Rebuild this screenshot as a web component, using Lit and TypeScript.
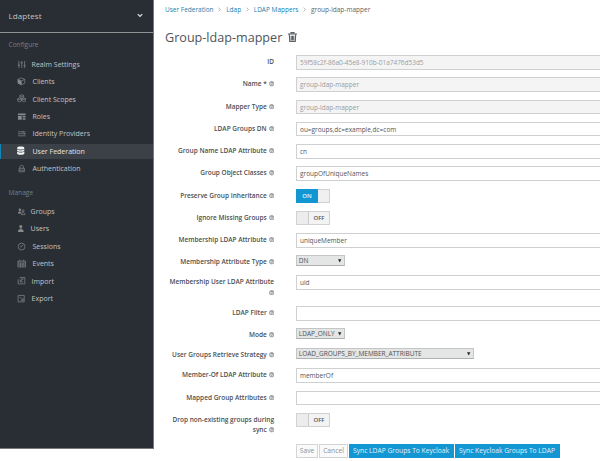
import { LitElement, html, css, svg, nothing } from "lit";
import { customElement } from "lit/decorators.js";
import { classMap } from "lit/directives/class-map.js";

const icons: Record<string, unknown> = {
  sliders: svg`<path d="M2 1v7.5M5 1v7.5M8 1v7.5M.8 5.5h2.4M3.8 3h2.4M6.8 6h2.4" />`,
  cube: svg`<path d="M4.5 1 8.2 2.5v4L4.5 8.3 1 6.5v-4zM1 2.5l3.5 1.7L8.2 2.5M4.5 4.2v4" /><path class="fill" d="M4.5 4.2 1 2.6v3.9l3.5 1.8z" />`,
  cubes: svg`<path d="M5 .8 7 1.7v2L5 4.6 3 3.7v-2zM2.7 4.2l2 .9v2.2l-2 1-2-1V5.1zM7.3 4.2l2 .9v2.2l-2 1-2-1V5.1zM3 1.8l2 .9 2-.9M.8 5.2l1.9.9 2-.9M5.3 5.2l2 .9 2-.9" />`,
  roles: svg`<path class="fill" d="M1 1.5h8v1.8H1zM1 4.2h4v4H1zM6 4.2h3v1.5H6zM6 6.7h3v1.5H6z" />`,
  idp: svg`<path d="M1 3h8M1 5h8M1 7.2h8M6.5 2v2M8 4v2" />`,
  database: svg`<path class="fill" d="M1.2 2C1.2 0 8.8 0 8.8 2v.7c0 1.4-7.6 1.4-7.6 0zM1.2 3.8c1.5 1.1 6.1 1.1 7.6 0v1.1c0 1.4-7.6 1.4-7.6 0zM1.2 6c1.5 1.1 6.1 1.1 7.6 0v1.9c0 1.8-7.6 1.8-7.6 0z" />`,
  lock: svg`<path d="M3.2 4.5V3C3.2.8 6.8.8 6.8 3v1.5M2.2 4.5h5.6v3.7H2.2zM2.2 6.5h5.6" />`,
  group: svg`<circle class="fill" cx="3" cy="2.8" r="1.3" /><path class="fill" d="M1 6.8c0-2.8 3.6-2.8 3.6 0z" /><circle cx="6.3" cy="4" r="1.1" /><path d="M4.5 8c0-2.8 4-2.8 4 0z" />`,
  user: svg`<circle class="fill" cx="4" cy="2.6" r="1.6" /><path class="fill" d="M1 8.3c0-2.2 1.2-2.8 2.3-2.8v-1h1.4v1c1.1 0 2.3.6 2.3 2.8z" />`,
  clock: svg`<circle cx="4.8" cy="4.8" r="3.6" /><path d="M6.2 2.9 4.6 5H3.2" />`,
  calendar: svg`<path d="M1 2.2h8v6.2H1zM1 4.2h8M3.6 4.2v4.2M6.3 4.2v4.2M1 6.3h8M3 .8v2M7 .8v2" />`,
  import: svg`<path d="M2.8 1.5h5.4v6.8H1.2V3.5M4 3h2.7M6.5 3 3.5 6M3.3 3.6v2.6h2.9" />`,
  export: svg`<path d="M1.2 1.5h6.4v6.8H1.2zM2.8 3l3.5 3.6M6.5 4.4v2.4H4" />`,
};

interface NavItem { icon: string; text: string; indent: number; active?: boolean }

const configure: NavItem[] = [
  { icon: "sliders", text: "Realm Settings", indent: 4 },
  { icon: "cube", text: "Clients", indent: 5 },
  { icon: "cubes", text: "Client Scopes", indent: 5 },
  { icon: "roles", text: "Roles", indent: 5 },
  { icon: "idp", text: "Identity Providers", indent: 5 },
  { icon: "database", text: "User Federation", indent: 5, active: true },
  { icon: "lock", text: "Authentication", indent: 5 },
];

const manage: NavItem[] = [
  { icon: "group", text: "Groups", indent: 3 },
  { icon: "user", text: "Users", indent: 3 },
  { icon: "clock", text: "Sessions", indent: 5 },
  { icon: "calendar", text: "Events", indent: 5 },
  { icon: "import", text: "Import", indent: 4 },
  { icon: "export", text: "Export", indent: 4 },
];

interface Field {
  label: string;
  kind: "text" | "switch" | "select";
  value?: string;
  on?: boolean;
  disabled?: boolean;
  noHelp?: boolean;
  tall?: boolean;
  width?: number;
}

const fields: Field[] = [
  { label: "ID", kind: "text", value: "59f58c2f-86a0-45e8-910b-01a7476d53d5", disabled: true, noHelp: true },
  { label: "Name *", kind: "text", value: "group-ldap-mapper", disabled: true },
  { label: "Mapper Type", kind: "text", value: "group-ldap-mapper", disabled: true },
  { label: "LDAP Groups DN", kind: "text", value: "ou=groups,dc=example,dc=com" },
  { label: "Group Name LDAP Attribute", kind: "text", value: "cn" },
  { label: "Group Object Classes", kind: "text", value: "groupOfUniqueNames" },
  { label: "Preserve Group Inheritance", kind: "switch", on: true },
  { label: "Ignore Missing Groups", kind: "switch" },
  { label: "Membership LDAP Attribute", kind: "text", value: "uniqueMember" },
  { label: "Membership Attribute Type", kind: "select", value: "DN", width: 49 },
  { label: "Membership User LDAP Attribute", kind: "text", value: "uid", tall: true },
  { label: "LDAP Filter", kind: "text", value: "" },
  { label: "Mode", kind: "select", value: "LDAP_ONLY", width: 49 },
  { label: "User Groups Retrieve Strategy", kind: "select", value: "LOAD_GROUPS_BY_MEMBER_ATTRIBUTE", width: 178 },
  { label: "Member-Of LDAP Attribute", kind: "text", value: "memberOf" },
  { label: "Mapped Group Attributes", kind: "text", value: "" },
  { label: "Drop non-existing groups during sync", kind: "switch", tall: true },
];

@customElement("side-nav")
class SideNav extends LitElement {
  static styles = css`
    :host {
      display: block;
      box-sizing: border-box;
      width: 154px;
      height: 449px;
      flex: none;
      background: #292e34;
      border-right: 1px solid #77787b;
      border-bottom: 1px solid #77787b;
      color: #c2c4c6;
      font-size: 7px;
    }
    .realm {
      display: flex;
      align-items: center;
      justify-content: space-between;
      box-sizing: border-box;
      height: 33px;
      padding: 0 10px 1px 8.5px;
      border-bottom: 1px solid #8f9193;
      font-size: 8px;
      letter-spacing: 0.08px;
    }
    .chevron { width: 6px; height: 5px; fill: none; stroke: #e4e5e6; stroke-width: 1.2; }
    .heading { display: flex; align-items: center; box-sizing: border-box; height: 22.6px; padding: 1.4px 0 0 8.5px; color: #797d82; font-size: 6.6px; }
    .second { height: 25.5px; padding-top: 5px; }
    ul { margin: 0; padding: 0; list-style: none; }
    li { display: flex; align-items: center; height: 17.4px; padding-left: 16.5px; }
    li.active { background: linear-gradient(#3b4147, #3b4147) 0 50% / 100% 15px no-repeat; color: #e3e5e6; }
    li.active::before { content: ""; width: 1.2px; height: 15px; margin: 0 15.3px 0 -16.5px; background: #1187b8; }
    .icon { width: 9.5px; height: 9.5px; flex: none; fill: none; stroke: #85898d; stroke-width: 0.75; }
    .icon .fill { fill: #85898d; stroke: none; }
    .active .icon .fill { fill: #f4f4f4; }
    .s3 { margin-left: 4.6px; }
    .s4 { margin-left: 5.6px; }
    .s5 { margin-left: 6.5px; }
  `;

  private list(items: NavItem[]) {
    return html`<ul>
      ${items.map(
        (i) => html`<li class=${classMap({ active: !!i.active })}>
          <svg class="icon" viewBox="0 0 10 10">${icons[i.icon]}</svg>
          <span class="s${i.indent}">${i.text}</span>
        </li>`
      )}
    </ul>`;
  }

  render() {
    return html`
      <div class="realm">
        <span>Ldaptest</span>
        <svg class="chevron" viewBox="0 0 6 5"><path d="M.8 1.2 3 3.5 5.2 1.2" /></svg>
      </div>
      <div class="heading">Configure</div>
      ${this.list(configure)}
      <div class="heading second">Manage</div>
      ${this.list(manage)}
    `;
  }
}

@customElement("mapper-field")
class MapperField extends LitElement {
  static properties = { field: { attribute: false } };
  declare field: Field;

  static styles = css`
    :host { display: block; }
    .row { display: flex; align-items: flex-start; height: 22.25px; }
    .row.select { height: 20px; }
    .row.tall { height: 30.8px; }
    .label {
      width: 110px;
      flex: none;
      margin-right: 22px;
      padding-top: 2px;
      text-align: right;
      line-height: 10.4px;
      font-size: 6.5px;
      font-weight: 600;
      color: #4a4f54;
    }
    .help { display: inline-block; width: 5.4px; height: 5.4px; margin-left: 0.2px; vertical-align: -0.4px; }
    .help circle { fill: #d3d7d9; stroke: #8d9397; stroke-width: 1.5; }
    .help path { fill: none; stroke: #6f767b; stroke-width: 1.2; }
    .input {
      box-sizing: border-box;
      flex: 1;
      height: 14.6px;
      padding-left: 3px;
      border: 1px solid #cfd0d1;
      border-right: 0;
      line-height: 13px;
      font-size: 6.48px;
      color: #52575b;
      background: #fff;
    }
    .input.disabled { background: #f4f4f4; color: #999da1; }
    .dropdown {
      display: flex;
      align-items: center;
      justify-content: space-between;
      box-sizing: border-box;
      height: 11px;
      padding: 0 2.5px 0 1.8px;
      border: 1px solid #c4c6c6;
      border-bottom-color: #aeb1b2;
      background: #e4e5e5;
      color: #4d5256;
      font-size: 6.5px;
      line-height: 9px;
    }
    .arrow { width: 3.4px; height: 3.6px; flex: none; fill: #25292c; }
    .switch { display: flex; box-sizing: border-box; width: 34px; height: 14px; font-size: 6px; font-weight: 600; line-height: 12.4px; text-align: center; border: 1px solid #d1d2d3; color: #53585c; background: #f3f3f3; }
    .word { flex: 1; }
    .knob { width: 11px; background: #ececec; border-right: 1px solid #c9cacb; }
    .on .word { margin: -1px 0 -1px -1px; line-height: 14px; background: #1297d3; color: #e9f5fb; }
    .on .knob { border: 0; background: #f0f0f0; }
  `;

  private control(f: Field) {
    if (f.kind === "text") return html`<div class=${classMap({ input: true, disabled: !!f.disabled })}>${f.value}</div>`;
    if (f.kind === "select")
      return html`<div class="dropdown" style="width:${f.width}px">
        <span>${f.value}</span>
        <svg class="arrow" viewBox="0 0 4 4"><path d="M0 .3h4L2 4z" /></svg>
      </div>`;
    return f.on
      ? html`<div class="switch on"><span class="word">ON</span><span class="knob"></span></div>`
      : html`<div class="switch"><span class="knob"></span><span class="word">OFF</span></div>`;
  }

  render() {
    const f = this.field;
    return html`<div class=${classMap({ row: true, select: f.kind === "select", tall: !!f.tall })}>
      <div class="label">
        ${f.label}
        ${f.noHelp
          ? nothing
          : html`<svg class="help" viewBox="0 0 10 10"><circle cx="5" cy="5" r="4.2" /><path d="M3.4 3.9C3.6 1.8 6.8 2 6.7 4 6.6 5 5 5 5 6.2M5 7v1.2" /></svg>`}
      </div>
      ${this.control(f)}
    </div>`;
  }
}

@customElement("app-root")
class AppRoot extends LitElement {
  static styles = css`
    :host {
      display: flex;
      align-items: flex-start;
      width: 600px;
      height: 461px;
      overflow: hidden;
      background: #fff;
      font-family: "Open Sans", "Noto Sans", sans-serif;
      white-space: normal;
    }
    main { flex: 1; min-width: 0; }
    nav { display: flex; align-items: center; height: 18px; padding-left: 11px; font-size: 6.5px; color: #60656a; }
    .link { color: #217fae; }
    .sep { width: 3px; height: 5px; margin: 0 4.8px; fill: none; stroke: #a3a6a8; stroke-width: 0.8; }
    h1 { display: flex; align-items: center; box-sizing: border-box; height: 37px; margin: 0; padding: 1px 0 0 11px; font-size: 12.6px; font-weight: 400; color: #4f5459; }
    .trash { width: 9px; height: 10px; margin-left: 5.5px; fill: none; stroke: #5c6166; stroke-width: 1.1; }
    .form { padding-left: 10px; }
    .actions { display: flex; padding-left: 142px; }
    .btn { display: flex; align-items: center; justify-content: center; box-sizing: border-box; height: 14px; border: 1px solid #d3d4d5; background: #fafafa; font-size: 6.7px; color: #8d9195; white-space: nowrap; }
    .save { width: 22px; }
    .cancel { width: 29px; margin: 0 1px 0 1px; }
    .primary { width: 105px; padding-right: 1px; background: #1297d3; border-color: #1297d3; color: #e2f1f8; }
    .first { margin-right: 1px; }
  `;

  render() {
    const sep = html`<svg class="sep" viewBox="0 0 3 5"><path d="M.5.6 2.4 2.5.5 4.4" /></svg>`;
    return html`
      <side-nav></side-nav>
      <main>
        <nav>
          <span class="link">User Federation</span>${sep}<span class="link">Ldap</span>${sep}<span class="link">LDAP Mappers</span>${sep}<span>group-ldap-mapper</span>
        </nav>
        <h1>
          Group-ldap-mapper
          <svg class="trash" viewBox="0 0 9 10"><path d="M0 2h9M3 1.8V.6h3v1.2M1.3 2.2l.4 7.2h5.6l.4-7.2M3.2 3.8v4.4M4.5 3.8v4.4M5.8 3.8v4.4" /></svg>
        </h1>
        <div class="form">${fields.map((f) => html`<mapper-field .field=${f}></mapper-field>`)}</div>
        <div class="actions">
          <div class="btn save">Save</div>
          <div class="btn cancel">Cancel</div>
          <div class="btn primary first">Sync LDAP Groups To Keycloak</div>
          <div class="btn primary">Sync Keycloak Groups To LDAP</div>
        </div>
      </main>
    `;
  }
}
